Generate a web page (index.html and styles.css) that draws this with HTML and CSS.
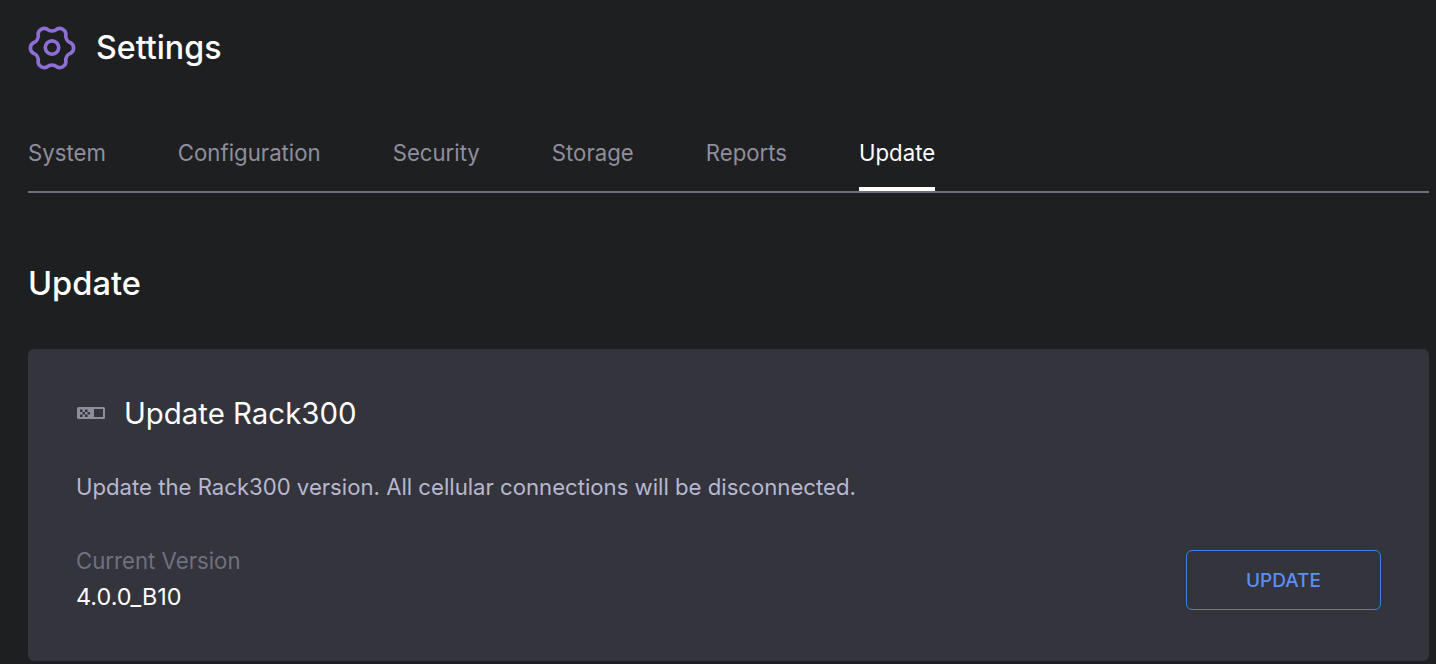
FILE: index.html
```html
<!DOCTYPE html>
<html lang="en">
<head>
    <meta charset="UTF-8">
    <title>Settings</title>
    <link rel="stylesheet" href="styles.css">
</head>
<body>
    <header class="page-header">
        <svg class="gear-icon" viewBox="0 0 48 48" fill="none" stroke="#8f6fd6" stroke-width="3.8">
            <path d="M43.8 29.3A6.5 6.5 0 0 0 43.8 18.7A8 8 0 0 1 38.5 9.5A6.5 6.5 0 0 0 29.3 4.2A8 8 0 0 1 18.7 4.2A6.5 6.5 0 0 0 9.5 9.5A8 8 0 0 1 4.2 18.7A6.5 6.5 0 0 0 4.2 29.3A8 8 0 0 1 9.5 38.5A6.5 6.5 0 0 0 18.7 43.8A8 8 0 0 1 29.3 43.8A6.5 6.5 0 0 0 38.5 38.5A8 8 0 0 1 43.8 29.3Z"/>
            <circle cx="24" cy="23.5" r="7"/>
        </svg>
        <h1>Settings</h1>
    </header>

    <nav class="tabs">
        <a class="tab">System</a>
        <a class="tab">Configuration</a>
        <a class="tab">Security</a>
        <a class="tab">Storage</a>
        <a class="tab">Reports</a>
        <a class="tab active">Update</a>
    </nav>

    <h2 class="section-title">Update</h2>

    <section class="card">
        <div class="card-title">
            <svg class="rack-icon" viewBox="0 0 28 12">
                <rect width="28" height="12" rx="1.5" fill="#8e8e9a"/>
                <rect x="17" y="2" width="9" height="8" fill="#33343c"/>
                <g fill="#33343c">
                    <rect x="3" y="2.5" width="2.5" height="2.5"/>
                    <rect x="8" y="2.5" width="2.5" height="2.5"/>
                    <rect x="5.5" y="5" width="2.5" height="2.5"/>
                    <rect x="10.5" y="5" width="2.5" height="2.5"/>
                    <rect x="3" y="7.5" width="2.5" height="2.5"/>
                    <rect x="8" y="7.5" width="2.5" height="2.5"/>
                </g>
            </svg>
            <h3>Update Rack300</h3>
        </div>
        <p class="card-text">Update the Rack300 version. All cellular connections will be disconnected.</p>
        <div class="card-footer">
            <div>
                <div class="version-label">Current Version</div>
                <div class="version-value">4.0.0_B10</div>
            </div>
            <button class="update-btn">UPDATE</button>
        </div>
    </section>
</body>
</html>
```

FILE: styles.css
```css
body {
    margin: 0;
    padding: 0 7px 0 28px;
    background-color: #1e1f21;
    color: #fff;
    font-family: Inter, Arial, sans-serif;
    overflow: hidden;
}
.page-header {
    display: flex;
    align-items: center;
    gap: 20px;
    height: 47px;
    padding-top: 24px;
}
.gear-icon {
    width: 48px;
    height: 46px;
    overflow: visible;
}
.page-header h1 {
    margin: 0;
    font-size: 32.2px;
    font-weight: 500;
}
.tabs {
    display: flex;
    gap: 72px;
    margin-top: 50px;
    height: 70px;
    border-bottom: 2px solid #6f6e80;
}
.tab {
    height: 70px;
    padding-top: 11px;
    box-sizing: border-box;
    font-size: 22.2px;
    line-height: 42px;
    color: #8e8e9e;
}
.tab.active {
    color: #fff;
    border-bottom: 4px solid #fff;
}
.section-title {
    margin: 70px 0 0;
    font-size: 32.6px;
    line-height: 40px;
    font-weight: 500;
}
.card {
    margin-top: 46px;
    height: 312px;
    box-sizing: border-box;
    padding: 48px;
    background-color: #33343c;
    border-radius: 6px;
}
.card-title {
    display: flex;
    align-items: center;
    gap: 19px;
    height: 32px;
    padding-left: 1px;
}
.rack-icon {
    width: 28px;
    height: 12px;
}
.card-title h3 {
    margin: 0;
    font-size: 29.4px;
    font-weight: 400;
}
.card-text {
    margin: 43px 0 0;
    font-size: 22.15px;
    line-height: 30px;
    color: #b8b8cf;
}
.card-footer {
    display: flex;
    justify-content: space-between;
    align-items: center;
    margin-top: 41px;
}
.version-label {
    font-size: 22.2px;
    line-height: 36px;
    color: #70707f;
}
.version-value {
    font-size: 23.4px;
    line-height: 36px;
}
.update-btn {
    width: 195px;
    height: 60px;
    margin-top: 2px;
    background: none;
    border: 1px solid #3f7fe6;
    border-radius: 6px;
    color: #5b8ff5;
    font-family: inherit;
    font-size: 19px;
    font-weight: 500;
}
```
